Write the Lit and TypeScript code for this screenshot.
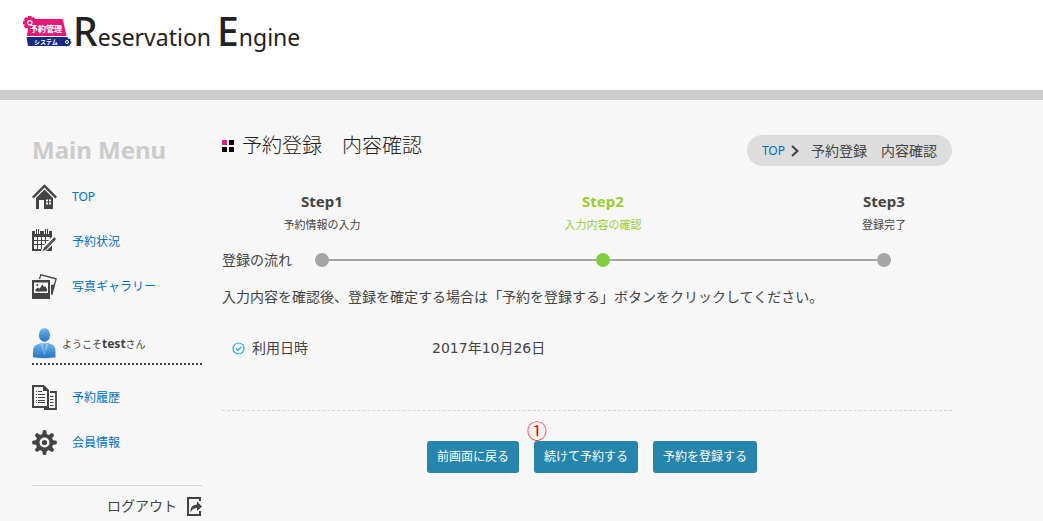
import { LitElement, html, css, svg } from "lit";
import { customElement } from "lit/decorators.js";

const houseIcon = html`<svg class="icon" viewBox="0 0 25 25" aria-hidden="true">
  <path d="M.8 13.6 12.5 2l11.7 11.6" fill="none" stroke="#444" stroke-width="2.4"/>
  <path d="M12.5 5.6 21 14v11h-9v-9H7v9H4V14z" fill="#444"/>
  <path d="M14 15.5h2v2h-2zm3 0h2v2h-2zm-3 3h2v2h-2zm3 0h2v2h-2z" fill="#f7f7f7"/>
</svg>`;

const calendarIcon = html`<svg class="icon" viewBox="0 0 25 25" aria-hidden="true">
  <path d="M0 2h20v20H0z" fill="#444"/>
  <path d="M3 0h5v5H3zM12 0h5v5h-5z" fill="#f7f7f7"/>
  <path d="M4 0h1v5H4zm2 0h1v5H6zm7 0h1v5h-1zm2 0h1v5h-1z" fill="#444"/>
  <path d="M2 8h3v3H2zm4 0h3v3H6zm4 0h3v3h-3zm4 0h4v3h-4zM2 12h3v3H2zm4 0h3v3H6zm4 0h3v3h-3zm4 0h4v3h-4zM2 16h3v4H2zm4 0h3v4H6zm4 0h3v4h-3z" fill="#f7f7f7"/>
  <path d="M8 24 11 17 21 7l4 1v4L15 21z" fill="#f7f7f7"/>
  <path d="m10 22.5 2.5-4.2L22.3 8.2l1.8 1.8-9.7 10.2z" fill="#444"/>
  <path d="m15 17.5 6-6.2" stroke="#999" stroke-width=".8"/>
</svg>`;

const galleryIcon = html`<svg class="icon" viewBox="0 0 25 25" aria-hidden="true">
  <path d="m7.5 5 1.3-4.2 15.3 4-4.3 16" fill="none" stroke="#444" stroke-width="1.3"/>
  <path d="M19 20V11h1.5l2-1-3 11z" fill="#444"/>
  <path d="M0 6h18v19H0z" fill="#444"/>
  <path d="M2 8.5h14V19H2z" fill="#f7f7f7"/>
  <path d="M3.5 17.5v-2l2.3-2 1.7 1.3 3-4.3 1.6 2.5 1.2-.8 1.7 3v2.3z" fill="#444"/>
  <circle cx="5.3" cy="11" r="1" fill="#444"/>
</svg>`;

const documentIcon = html`<svg class="icon" viewBox="0 0 25 25" aria-hidden="true">
  <path d="M1 1h10.5L16 5.500V22H1z" fill="none" stroke="#444" stroke-width="2"/>
  <path d="M11 0v6h6z" fill="#444"/>
  <path d="M4 6.500h1m1 0h4M4 9.500h1m1 0h7M4 12.500h1m1 0h7M4 15.500h1m1 0h7M4 17.500h1m1 0h7" stroke="#444"/>
  <path d="M18 7h6v17H12" fill="none" stroke="#444" stroke-width="1.800"/>
  <path d="M18 11.500h3.500M18 14.500h3.500M18 17.500h3.500M18 20.500h3.500" stroke="#444"/>
</svg>`;

const gearIcon = html`<svg class="icon" viewBox="0 0 25 25" aria-hidden="true">
  ${[0, 45, 90, 135, 180, 225, 270, 315].map(
    (a) => svg`<path d="M10 5 10.800 .6q1.700-1 3.400 0L15 5z" fill="#444" transform="rotate(${a} 12.5 12.5)"/>`
  )}
  <circle cx="12.500" cy="12.500" r="6.900" fill="none" stroke="#444" stroke-width="3.800"/>
  <circle cx="12.500" cy="12.500" r="2.600" fill="#444"/>
</svg>`;

const avatarIcon = html`<svg class="avatar" viewBox="0 0 25 31" aria-hidden="true">
  <defs>
    <linearGradient id="blue" x1="0" y1="0" x2="0" y2="1">
      <stop offset="0" stop-color="#6fb4ee"/><stop offset="1" stop-color="#2474bd"/>
    </linearGradient>
  </defs>
  <ellipse cx="13" cy="29.500" rx="12" ry="1.200" fill="#ccc"/>
  <path d="M1 29V23q0-5 4-6.500l4-1.500h7l4 1.500q3.500 1.500 3.500 6.500v6q-11 2-22.500 0z" fill="url(#blue)"/>
  <path d="m8 15 4.500 12L17 15z" fill="#8cc3ef"/>
  <path d="m11 17 1.500-1 1.500 1-.5 2 .8 5-1.800 3-1.800-3 .8-5z" fill="#5da5e0"/>
  <ellipse cx="12.500" cy="7" rx="5.600" ry="6.800" fill="url(#blue)"/>
</svg>`;

const logoutIcon = html`<svg class="exit" viewBox="0 0 15 19" aria-hidden="true">
  <path d="M13 4V1H1v17h12v-4" fill="none" stroke="#444" stroke-width="2"/>
  <path d="M3.500 15.500Q3 8 10 7.500V4.500l5 5-5 4.500v-3q-4-.5-6.500 4.500z" fill="#444"/>
</svg>`;

const checkIcon = html`<svg class="check" viewBox="0 0 13 13" aria-hidden="true">
  <circle cx="6.500" cy="6.500" r="5.500" fill="none" stroke="#29abd4" stroke-width="1.200"/>
  <path d="m4 6.500 1.900 1.800L9.300 5" fill="none" stroke="#29abd4" stroke-width="1.300"/>
</svg>`;

const logoMark = html`<svg class="mark" viewBox="0 0 50 34" role="img" aria-label="予約管理システム">
  ${[0, 45, 90, 135, 180, 225, 270, 315].map(
    (a) => svg`<path d="M6 1h3.500v4H6z" fill="#ea1675" transform="rotate(${a} 7.750 7.750)"/>`
  )}
  <circle cx="7.750" cy="7.750" r="5.500" fill="#ea1675"/>
  <path d="M7 4h32.500q1.200 0 1.500 1l3.500 16H5z" fill="#ea1675"/>
  <circle cx="7.750" cy="7.750" r="2.200" fill="#ea1675" stroke="#fff" stroke-width="1.300"/>
  <path d="M4.500 22H45l1.500 9H7q-1 0-1.200-1z" fill="#142a83"/>
  <circle cx="45" cy="27" r="3.600" fill="#142a83" stroke="#142a83" stroke-width="1.600" stroke-dasharray="1.500 1.200"/>
  <circle cx="45" cy="27" r="1.500" fill="none" stroke="#fff"/>
  <text x="8" y="17" font-size="8" font-weight="900" fill="#fff">予約管理</text>
  <text x="12" y="29" font-size="6" font-weight="700" fill="#fff">システム</text>
</svg>`;

@customElement("app-root")
export class AppRoot extends LitElement {
  static styles = css`
    :host {
      display: block;
      min-height: 100vh;
      background: #f7f7f7;
      color: #444;
      font: 14px/20px "Noto Sans", "Noto Sans CJK JP", sans-serif;
    }
    * { box-sizing: border-box; }
    h1, h2, ul, ol, dl, dd, p { margin: 0; padding: 0; }
    ul, ol { list-style: none; }
    a { color: #0070c9; text-decoration: none; }
    svg { flex: none; display: block; }
    .header {
      height: 100px;
      padding: 15px 22px;
      background: #fff;
      border-bottom: 10px solid #ccc;
    }
    .brand { display: flex; gap: 1px; color: #222; width: fit-content; }
    .mark { width: 50px; height: 34px; font-family: "Noto Sans CJK JP", sans-serif; }
    .wordmark { font: 23px/32px "Noto Sans", sans-serif; white-space: nowrap; }
    .cap { font-size: 39px; font-weight: 500; }
    .layout {
      display: grid;
      grid-template-columns: 170px minmax(0, 1fr);
      gap: 20px;
      max-width: 952px;
      padding: 35px 0 5px 32px;
    }
    .menu-title { color: #ccc; font-size: 24px; line-height: 30px; margin-bottom: 19px; }
    .menu { display: grid; gap: 20px; font-size: 12px; }
    .menu a { display: flex; align-items: center; gap: 15px; height: 25px; }
    .icon { width: 25px; height: 25px; }
    .welcome {
      display: flex;
      align-items: center;
      gap: 5px;
      margin: 29px 0 20px;
      padding-bottom: 4px;
      border-bottom: 2px dotted #444;
      font-size: 10px;
    }
    .welcome b { font-size: 12px; }
    .avatar { width: 25px; height: 31px; }
    .logout {
      display: flex;
      justify-content: flex-end;
      align-items: center;
      gap: 10px;
      margin-top: 30px;
      padding-top: 10px;
      border-top: 1px solid #d8d8d8;
      color: #444;
    }
    .exit { width: 15px; height: 19px; }
    .top { display: flex; justify-content: space-between; align-items: flex-start; height: 56px; }
    .title {
      display: flex;
      align-items: center;
      gap: 8px;
      color: #222;
      font-size: 20px;
      font-weight: 300;
      line-height: 22px;
    }
    .squares { width: 12px; height: 12px; }
    .crumbs {
      display: flex;
      align-items: center;
      height: 31px;
      padding: 0 15px;
      border-radius: 16px;
      background: #ddd;
    }
    .crumbs a { font-size: 12px; }
    .arrow { width: 8px; height: 12px; margin: 0 12px 0 6px; }
    .steps { display: flex; justify-content: space-between; margin-left: 32px; text-align: center; }
    .step { width: 136px; font-size: 11px; }
    .step b { display: block; margin-bottom: 4px; font-size: 15px; line-height: 20px; }
    .step.current { color: #9acd32; }
    .flow { display: flex; align-items: center; margin: 15px 0 17px; padding-right: 61px; }
    .flow-label { width: 93px; }
    .track { display: flex; align-items: center; flex: 1; }
    .dot { width: 14px; height: 14px; border-radius: 50%; background: #a5a5a5; }
    .dot.current { background: #80cf40; }
    .line { flex: 1; height: 2px; background: #a5a5a5; }
    .details {
      display: grid;
      grid-template-columns: 200px 1fr;
      margin-top: 31px;
      padding: 0 10px 52px;
      border-bottom: 1px dashed #d8d8d8;
    }
    .details dt { display: flex; align-items: center; gap: 7px; }
    .details dd { font-family: "DejaVu Sans", "Noto Sans CJK JP", sans-serif; }
    .check { width: 13px; height: 13px; }
    .actions { display: flex; justify-content: center; gap: 15px; padding: 30px 0 0 10px; }
    .button {
      position: relative;
      height: 32px;
      padding: 0 10px;
      border: 0;
      border-radius: 3px;
      background: #2585ad;
      color: #fff;
      font: inherit;
      font-size: 12px;
      cursor: pointer;
    }
    .callout {
      position: absolute;
      left: -7px;
      top: -20px;
      color: #f00;
      font: 20px/20px "Noto Sans CJK JP", sans-serif;
    }
  `;

  private menu = [
    { label: "TOP", icon: houseIcon },
    { label: "予約状況", icon: calendarIcon },
    { label: "写真ギャラリー", icon: galleryIcon },
  ];

  private account = [
    { label: "予約履歴", icon: documentIcon },
    { label: "会員情報", icon: gearIcon },
  ];

  private steps = [
    { name: "Step1", text: "予約情報の入力" },
    { name: "Step2", text: "入力内容の確認", current: true },
    { name: "Step3", text: "登録完了" },
  ];

  private renderMenu(items: { label: string; icon: unknown }[]) {
    return html`<ul class="menu">
      ${items.map((i) => html`<li><a href="#">${i.icon}<span>${i.label}</span></a></li>`)}
    </ul>`;
  }

  render() {
    return html`
      <header class="header">
        <a class="brand" href="#">${logoMark}<span class="wordmark"><span class="cap">R</span>eservation <span class="cap">E</span>ngine</span></a>
      </header>
      <div class="layout">
        <nav>
          <h2 class="menu-title">Main Menu</h2>
          ${this.renderMenu(this.menu)}
          <p class="welcome">${avatarIcon}<span>ようこそ<b>test</b>さん</span></p>
          ${this.renderMenu(this.account)}
          <a class="logout" href="#">ログアウト${logoutIcon}</a>
        </nav>
        <main>
          <div class="top">
            <h1 class="title">
              <svg class="squares" viewBox="0 0 12 12" aria-hidden="true">
                <path d="M0 0h5v5H0z" fill="#ea1c80"/>
                <path d="M7 0h5v5H7zM0 7h5v5H0zM7 7h5v5H7z" fill="#000"/>
              </svg>
              予約登録　内容確認
            </h1>
            <div class="crumbs">
              <a href="#">TOP</a>
              <svg class="arrow" viewBox="0 0 8 12" aria-hidden="true">
                <path d="m1 1 5.500 5L1 11" fill="none" stroke="#444" stroke-width="2.200"/>
              </svg>
              <span>予約登録　内容確認</span>
            </div>
          </div>
          <ol class="steps">
            ${this.steps.map(
              (s) => html`<li class="step ${s.current ? "current" : ""}"><b>${s.name}</b>${s.text}</li>`
            )}
          </ol>
          <div class="flow">
            <span class="flow-label">登録の流れ</span>
            <div class="track">
              ${this.steps.map(
                (s, i) => html`${i ? html`<span class="line"></span>` : ""}<span class="dot ${s.current ? "current" : ""}"></span>`
              )}
            </div>
          </div>
          <p>入力内容を確認後、登録を確定する場合は「予約を登録する」ボタンをクリックしてください。</p>
          <dl class="details">
            <dt>${checkIcon}利用日時</dt>
            <dd>2017年10月26日</dd>
          </dl>
          <div class="actions">
            <button class="button" type="button">前画面に戻る</button>
            <button class="button" type="button"><span class="callout">①</span>続けて予約する</button>
            <button class="button" type="button">予約を登録する</button>
          </div>
        </main>
      </div>
    `;
  }
}
